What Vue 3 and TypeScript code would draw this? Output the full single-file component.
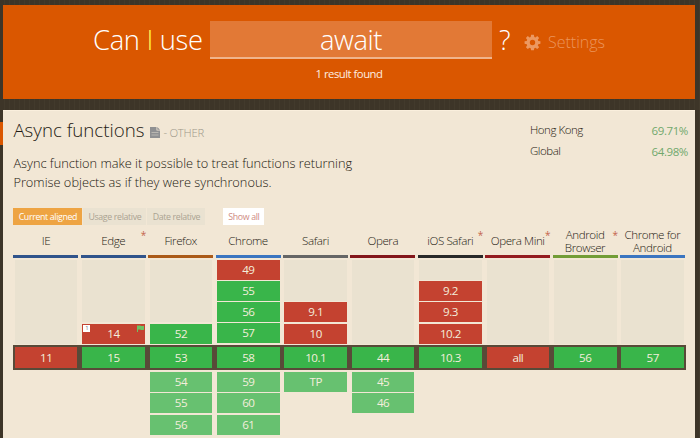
<script setup lang="ts">
import { ref } from 'vue'

type Support = 'y' | 'n'
interface Version { v: string; s: Support; note?: string; flag?: boolean }
interface Browser {
  name: string
  key: string
  star?: boolean
  past: Version[]
  current: Version
  future: string[]
}

const query = ref('await')

const browsers: Browser[] = [
  { name: 'IE', key: 'ie', past: [], current: { v: '11', s: 'n' }, future: [] },
  { name: 'Edge', key: 'edge', star: true, past: [{ v: '14', s: 'n', note: '1', flag: true }], current: { v: '15', s: 'y' }, future: [] },
  { name: 'Firefox', key: 'firefox', past: [{ v: '52', s: 'y' }], current: { v: '53', s: 'y' }, future: ['54', '55', '56'] },
  {
    name: 'Chrome', key: 'chrome',
    past: [{ v: '49', s: 'n' }, { v: '55', s: 'y' }, { v: '56', s: 'y' }, { v: '57', s: 'y' }],
    current: { v: '58', s: 'y' }, future: ['59', '60', '61'],
  },
  { name: 'Safari', key: 'safari', past: [{ v: '9.1', s: 'n' }, { v: '10', s: 'n' }], current: { v: '10.1', s: 'y' }, future: ['TP'] },
  { name: 'Opera', key: 'opera', past: [], current: { v: '44', s: 'y' }, future: ['45', '46'] },
  {
    name: 'iOS Safari', key: 'ios', star: true,
    past: [{ v: '9.2', s: 'n' }, { v: '9.3', s: 'n' }, { v: '10.2', s: 'n' }],
    current: { v: '10.3', s: 'y' }, future: [],
  },
  { name: 'Opera Mini', key: 'mini', star: true, past: [], current: { v: 'all', s: 'n' }, future: [] },
  { name: 'Android Browser', key: 'android', star: true, past: [], current: { v: '56', s: 'y' }, future: [] },
  { name: 'Chrome for Android', key: 'chrome', past: [], current: { v: '57', s: 'y' }, future: [] },
]
</script>

<template>
  <div class="page">
    <header class="hero">
      <div class="search">
        <span class="ask">Can <i>I</i> use</span>
        <input v-model="query" class="field" type="text" />
        <span class="mark">?</span>
        <svg class="gear" viewBox="0 0 18 18">
          <path
            fill-rule="evenodd"
            d="M7.5 .8h3l.4 2.3 1.2.5 1.9-1.4 2 2-1.4 1.9.5 1.2 2.3.4v2.7l-2.3.4-.5 1.2 1.4 1.9-2 2-1.9-1.4-1.2.5-.4 2.3h-3l-.4-2.3-1.2-.5L4 15.900l-2-2L3.400 12l-.5-1.200-2.300-.400V7.700l2.300-.400.500-1.200L2 4.200l2-2 1.900 1.400 1.200-.500zM9 6.200a2.850 2.850 0 1 0 0 5.700a2.850 2.850 0 1 0 0-5.700z"
          />
        </svg>
        <span class="settings">Settings</span>
      </div>
      <p class="found">1 result found</p>
    </header>

    <div class="body-row">
      <span class="tab"></span>
      <main class="panel">
        <div class="top">
          <div class="info">
            <h1 class="title">
              <span class="name">Async functions</span>
              <svg class="doc" viewBox="0 0 10 11">
                <path d="M0 0h6.500v3.500H10V11H0z M7.300 0L10 2.700H7.300z" />
                <path class="lines" d="M1.500 5.500h7M1.500 8h7" />
              </svg>
              <span class="kind">- OTHER</span>
            </h1>
            <p class="desc">Async function make it possible to treat functions returning<br />Promise objects as if they were synchronous.</p>
          </div>
          <dl class="usage">
            <dt>Hong Kong</dt><dd>69.71%</dd>
            <dt>Global</dt><dd>64.98%</dd>
          </dl>
        </div>

        <div class="modes">
          <span class="mode active">Current aligned</span>
          <span class="mode usage-mode">Usage relative</span>
          <span class="mode date-mode">Date relative</span>
          <span class="mode all">Show all</span>
        </div>

        <div class="row heads">
          <div v-for="b in browsers" :key="b.name" class="head" :class="b.key">
            <span class="label">{{ b.name }}</span>
            <span v-if="b.star" class="star">*</span>
          </div>
        </div>
        <div class="row past">
          <div v-for="b in browsers" :key="b.name" class="stack">
            <div v-if="b.past.length < 4" class="blank"></div>
            <div v-for="p in b.past" :key="p.v" class="cell" :class="p.s">
              {{ p.v }}
              <span v-if="p.note" class="note">{{ p.note }}</span>
              <svg v-if="p.flag" class="flag" viewBox="0 0 7 7">
                <path d="M0 .5h1V7H0z M1 .8c2-1 3 1 6 0v4c-3 1-4-1-6 0z" />
              </svg>
            </div>
          </div>
        </div>
        <div class="row now">
          <div v-for="b in browsers" :key="b.name" class="cell" :class="b.current.s">{{ b.current.v }}</div>
        </div>
        <div class="row future">
          <div v-for="b in browsers" :key="b.name" class="stack">
            <div v-for="f in b.future" :key="f" class="cell soon">{{ f }}</div>
          </div>
        </div>
      </main>
    </div>
  </div>
</template>

<style>
body { margin: 0; }
</style>

<style scoped>
* { box-sizing: border-box; }
.page {
  width: 700px;
  height: 438px;
  overflow: hidden;
  padding-top: 5px;
  font-family: "Open Sans", "Noto Sans", sans-serif;
  color: #625d4f;
  background: repeating-linear-gradient(90deg, #3d3528 0 4px, #423a2c 4px 5px);
}
.hero {
  width: 692px;
  height: 94px;
  margin-left: 3px;
  padding: 16px 0 0 90px;
  background: #da5700;
  color: #fff;
}
.search { display: flex; height: 38px; white-space: nowrap; font-weight: 300; }
.ask { width: 117px; font-size: 27.4px; line-height: 38px; letter-spacing: -0.35px; }
.ask i { font-style: normal; color: #fff04d; }
.field {
  width: 282px;
  height: 38px;
  padding: 0;
  border: 0;
  border-bottom: 2px solid #f0b48c;
  border-radius: 0;
  outline: none;
  background: #e27936;
  color: #fff;
  font: 300 27.4px "Open Sans", sans-serif;
  letter-spacing: -0.4px;
  text-align: center;
}
.mark { width: 32px; padding-left: 7px; font-size: 27.4px; line-height: 38px; }
.gear { width: 17px; height: 17px; margin-top: 13px; fill: #ec9860; }
.settings { margin-left: 7px; font-size: 16px; line-height: 43px; color: #eb945b; }
.found { margin: 7px 0 0; width: 512px; text-align: center; font-size: 11.3px; line-height: 16px; letter-spacing: -0.5px; color: #fdeee2; }
.body-row { display: flex; margin-top: 11px; }
.tab { width: 3px; height: 23px; margin-top: 12px; background: #da5700; }
.panel { width: 692px; height: 328px; padding-left: 10.4px; background: #f2e7d5; border-top: 1px solid #faefdd; }
.top { display: flex; height: 97px; }
.info { width: 516.6px; }
.title { display: flex; margin: 0; height: 39px; font-weight: 300; white-space: nowrap; }
.name { width: 137px; font-size: 18.7px; line-height: 38px; color: #1f1b14; }
.doc { width: 10px; height: 11px; margin-top: 16px; fill: #8f9092; }
.doc .lines { stroke: #b9b7b1; stroke-width: 1; }
.kind { margin-left: 3px; font-size: 11.3px; line-height: 44px; letter-spacing: -0.25px; color: #9c9789; }
.desc { margin: 4px 0 0; font-size: 12.8px; font-weight: 300; line-height: 19px; white-space: nowrap; color: #1c1810; }
.usage {
  display: grid;
  grid-template-columns: 80px 78px;
  grid-auto-rows: 20.5px;
  margin: 8px 0 0;
  font-size: 11.5px;
  line-height: 22px;
}
.usage dt { font-weight: 300; color: #1f1b12; letter-spacing: -0.45px; }
.usage dd { margin: 0; padding-top: 1px; text-align: right; letter-spacing: -0.4px; color: #70a86c; }
.modes { display: flex; gap: 1px; height: 17px; font-size: 8.8px; line-height: 18px; letter-spacing: -0.35px; text-align: center; white-space: nowrap; }
.mode { background: #eae2d1; color: #aaa291; }
.active { width: 69px; background: #eea443; color: #fff; }
.usage-mode { width: 63px; }
.date-mode { width: 58px; }
.all { width: 41px; margin-left: 17px; background: #fff; color: #cf8b82; }
.row { display: grid; grid-template-columns: repeat(10, 65px); column-gap: 2.4px; width: 672px; }
.heads { height: 33px; }
.head {
  position: relative;
  display: flex;
  align-items: center;
  justify-content: center;
  height: 33px;
  padding-top: 3px;
  border-bottom: 3px solid;
  text-align: center;
  font-size: 11.6px;
  font-weight: 300;
  line-height: 12.6px;
  letter-spacing: -0.4px;
}
.label { color: #1f1b12; }
.star { position: absolute; top: 4px; right: 0; color: #c4654c; font-size: 10px; font-weight: 400; line-height: 13px; }
.ie, .edge { border-color: #31548b; }
.firefox { border-color: #ab5a18; }
.chrome { border-color: #3b75c0; }
.safari { border-color: #666; }
.opera { border-color: #83161a; }
.ios { border-color: #292929; }
.mini { border-color: #941c20; }
.android { border-color: #739d36; }
.past { height: 86px; padding-top: 1.5px; }
.stack { display: flex; flex-direction: column; gap: 1.3px; margin: 0 1px 0 1.5px; }
.blank { flex: 1; background: #eae2d0; }
.cell {
  position: relative;
  flex: none;
  height: 20px;
  color: #f3eedc;
  font-size: 11.6px;
  line-height: 20.5px;
  letter-spacing: -0.45px;
  text-align: center;
}
.past .stack { height: 84px; }
.y { background: #39b54a; }
.n { background: #c44230; }
.soon { background: #67c170; }
.now { height: 25px; margin-top: 1px; padding-top: 2px; background: #584a38; width: 673px; }
.now .cell { height: 21px; margin: 0 1px 0 1.5px; line-height: 22px; }
.future { padding-top: 2px; }
.note { position: absolute; left: 1px; top: 1px; width: 7px; height: 7px; background: #fff; color: #777; font-size: 6px; line-height: 7px; }
.flag { position: absolute; right: 1px; top: 1px; width: 7px; height: 7px; fill: #6cc364; }
</style>
